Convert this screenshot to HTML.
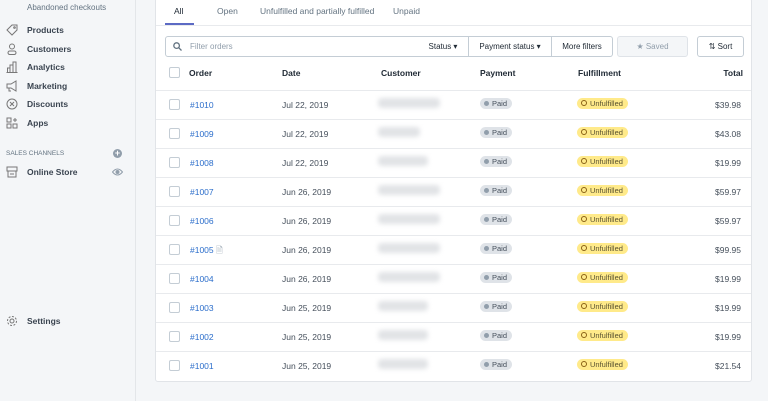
<!DOCTYPE html><html><head><style>
body{margin:0;width:768px;height:401px;background:#f4f6f8;font-family:"Liberation Sans",sans-serif;font-size:8.5px;color:#212b36;position:relative;overflow:hidden}
.sb{position:absolute;left:0;top:0;width:135px;height:401px;background:#f4f6f8;border-right:1px solid #e3e6e9}
.it{position:absolute;left:27px;font-size:8.5px;font-weight:bold;color:#3a4450}
.ic{position:absolute;left:6px;width:12px;height:12px}
.card{position:absolute;left:155px;top:-2px;width:595px;height:382px;background:#fff;border:1px solid #e1e4e8;border-radius:3px}
.tab{position:absolute;top:7px;font-size:8.5px;color:#637381}
.row{position:absolute;left:0;width:595px;height:29px;border-top:1px solid #e8eaed}
.row span{position:absolute;top:9px}
.cb{position:absolute;left:13px;top:8px;width:9px;height:9px;border:1px solid #c4cdd5;border-radius:2px}
.blur{position:absolute;left:222px;top:7px;height:10px;background:#e1e3e6;filter:blur(2.5px);border-radius:4px}
.paid{position:absolute;left:324px;top:7px;background:#dfe3e8;border-radius:8px;padding:1px 5px 1px 4px;font-size:7.5px;color:#454f5b}
.paid:before{content:"";display:inline-block;width:5px;height:5px;border-radius:50%;background:#919eab;margin-right:3px;vertical-align:0}
.unf{position:absolute;left:421px;top:7px;background:#ffea8a;border-radius:8px;padding:1px 5px 1px 4px;font-size:7.5px;color:#595130}
.unf:before{content:"";display:inline-block;width:4px;height:4px;border-radius:50%;border:1px solid #8a6116;margin-right:3px;vertical-align:0}
.btn{position:absolute;top:37px;height:19px;border:1px solid #c4cdd5;font-size:8px;color:#212b36;line-height:19px;text-align:center;background:#fff}
</style></head><body>
<div class="sb">
<div style="position:absolute;left:27px;top:3px;font-size:8px;color:#637381">Abandoned checkouts</div>
<svg class="ic" style="top:24px" viewBox="0 0 12 12" fill="none" stroke="#777" stroke-width="1"><path d="M1 6L6 1H11V6L6 11Z"/><circle cx="8.5" cy="3.5" r=".8"/></svg><div class="it" style="top:25px">Products</div>
<svg class="ic" style="top:43px" viewBox="0 0 12 12" fill="none" stroke="#777"><circle cx="6" cy="3.5" r="2.5"/><rect x="2" y="8" width="8" height="3.5" rx="1.7"/></svg><div class="it" style="top:44px">Customers</div>
<svg class="ic" style="top:61px" viewBox="0 0 12 12" fill="none" stroke="#777"><path d="M0.5 11.5H11.5M1.5 11V7H4V11M4 11V4H7V11M7 11V1H10V11"/></svg><div class="it" style="top:62px">Analytics</div>
<svg class="ic" style="top:80px" viewBox="0 0 12 12" fill="none" stroke="#777"><path d="M1 4H5L10 1V11L5 8H1ZM3 8V11H5"/></svg><div class="it" style="top:81px">Marketing</div>
<svg class="ic" style="top:98px" viewBox="0 0 12 12" fill="none" stroke="#777"><circle cx="6" cy="6" r="5"/><path d="M4 4L8 8M8 4L4 8"/></svg><div class="it" style="top:99px">Discounts</div>
<svg class="ic" style="top:117px" viewBox="0 0 12 12" fill="none" stroke="#777"><rect x="1" y="1" width="4" height="4"/><rect x="1" y="7" width="4" height="4"/><rect x="7" y="7" width="4" height="4"/><path d="M9 1V5M7 3H11"/></svg><div class="it" style="top:118px">Apps</div>
<div style="position:absolute;left:6px;top:150px;font-size:6.5px;color:#637381">SALES CHANNELS</div>
<div style="position:absolute;left:113px;top:149px;width:9px;height:9px;border-radius:50%;background:#919eab;color:#fff;font-size:9px;line-height:9px;text-align:center;font-weight:bold">+</div>
<svg class="ic" style="top:166px" viewBox="0 0 12 12" fill="none" stroke="#777"><rect x="1" y="1" width="10" height="4"/><path d="M2 5V11H10V5M4 8H8"/></svg><div class="it" style="top:167px">Online Store</div>
<svg style="position:absolute;left:112px;top:168px" width="11" height="8" viewBox="0 0 11 8" fill="none" stroke="#919eab"><path d="M0.5 4Q5.5 -2 10.5 4Q5.5 10 0.5 4Z"/><circle cx="5.5" cy="4" r="1.5" fill="#919eab"/></svg>
<svg class="ic" style="top:315px" viewBox="0 0 12 12" fill="none" stroke="#777"><circle cx="6" cy="6" r="2"/><circle cx="6" cy="6" r="4.5" stroke-dasharray="2 1.5"/></svg><div class="it" style="top:316px">Settings</div>
</div>
<div class="card">
<div class="tab" style="left:18px;color:#212b36">All</div>
<div style="position:absolute;left:9px;top:24px;width:29px;height:2px;background:#5c6ac4"></div>
<div class="tab" style="left:61px">Open</div>
<div class="tab" style="left:104px">Unfulfilled and partially fulfilled</div>
<div class="tab" style="left:237px">Unpaid</div>
<div style="position:absolute;left:0;top:26px;width:595px;border-top:1px solid #e8eaed"></div>
<div class="btn" style="left:9px;width:252px;text-align:left;border-radius:3px 0 0 3px"><svg style="position:absolute;left:7px;top:5px" width="9" height="9" viewBox="0 0 9 9" fill="none" stroke="#637381" stroke-width="1.3"><circle cx="3.6" cy="3.6" r="2.8"/><path d="M5.6 5.6L8.5 8.5"/></svg><span style="position:absolute;left:24px;color:#919eab">Filter orders</span></div>
<div class="btn" style="left:262px;width:50px;border-left:none">Status ▾</div>
<div class="btn" style="left:313px;width:82px;border-left:none">Payment status ▾</div>
<div class="btn" style="left:396px;width:60px;border-left:none;border-radius:0 3px 3px 0">More filters</div>
<div class="btn" style="left:461px;width:69px;background:#f4f6f8;color:#919eab;border-color:#dfe3e8;border-radius:3px">★ Saved</div>
<div class="btn" style="left:541px;width:45px;border-radius:3px">⇅ Sort</div>
<div class="row" style="top:61px;border:none;font-weight:bold">
<div class="cb" style="top:7px"></div><span style="left:33px;top:8px">Order</span><span style="left:126px;top:8px">Date</span><span style="left:225px;top:8px">Customer</span><span style="left:324px;top:8px">Payment</span><span style="left:422px;top:8px">Fulfillment</span><span style="right:8px;top:8px">Total</span></div>
<div id="rows"></div>
</div>
<script>
var d=[["#1010","Jul 22, 2019","$39.98",62],["#1009","Jul 22, 2019","$43.08",42],["#1008","Jul 22, 2019","$19.99",50],["#1007","Jun 26, 2019","$59.97",62],["#1006","Jun 26, 2019","$59.97",62],["#1005","Jun 26, 2019","$99.95",62],["#1004","Jun 26, 2019","$19.99",62],["#1003","Jun 25, 2019","$19.99",50],["#1002","Jun 25, 2019","$19.99",50],["#1001","Jun 25, 2019","$21.54",50]];
var h="";d.forEach(function(r,i){h+='<div class="row" style="top:'+(91+i*29)+'px"><div class="cb"></div><span style="left:34px;color:#2c6ecb">'+r[0]+(r[0]=="#1005"?' <b style="color:#919eab;font-weight:normal">🗎</b>':'')+'</span><span style="left:126px;color:#454f5b">'+r[1]+'</span><div class="blur" style="width:'+r[3]+'px"></div><div class="paid">Paid</div><div class="unf">Unfulfilled</div><span style="right:10px;color:#454f5b">'+r[2]+'</span></div>'});
document.getElementById("rows").outerHTML=h;
</script>
</body></html>
